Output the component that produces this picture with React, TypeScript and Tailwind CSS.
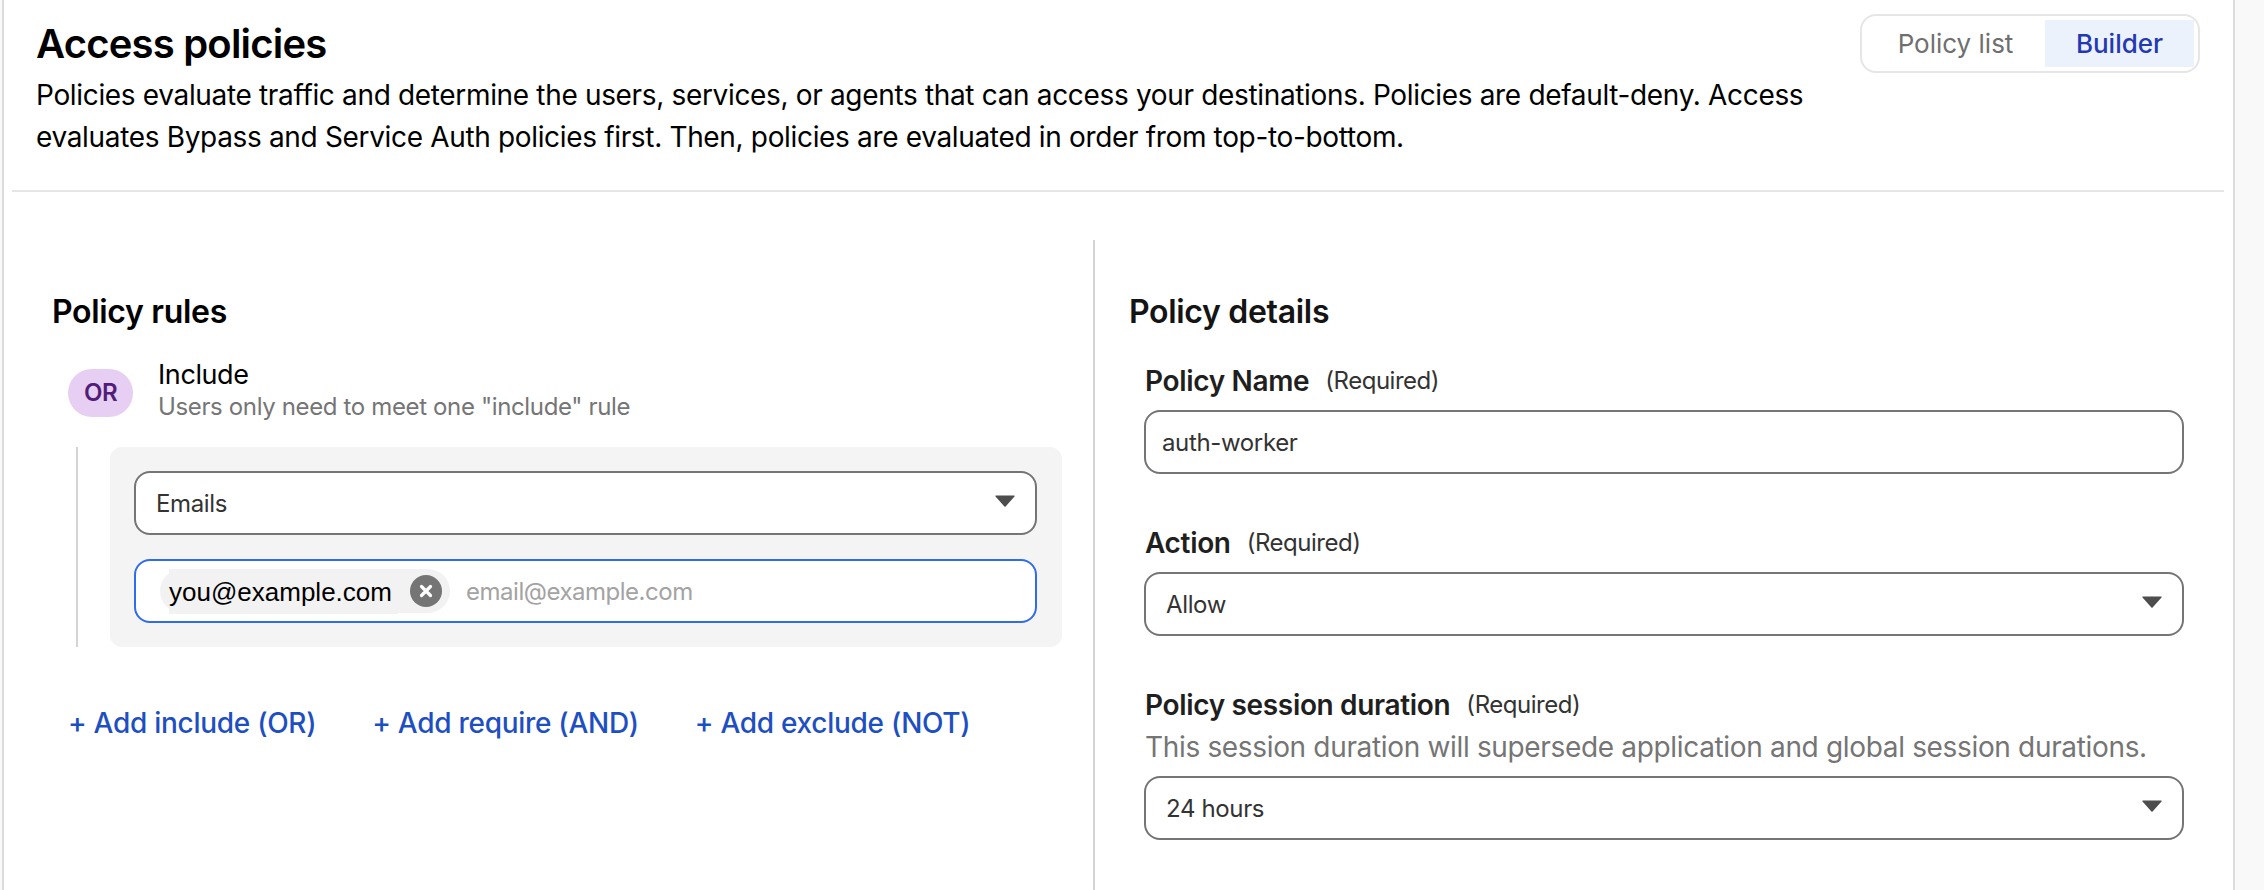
import React from "react";

function Caret() {
  return (
    <svg width="20" height="12" viewBox="0 0 20 12" className="shrink-0">
      <path d="M1 0.5h18a0.7 0.7 0 0 1 0.5 1.1L10.6 11.4a0.8 0.8 0 0 1-1.2 0L0.5 1.6A0.7 0.7 0 0 1 1 0.5z" fill="#4d4d4d" />
    </svg>
  );
}

function Select({ value }: { value: string }) {
  return (
    <div className="flex h-[64px] items-center justify-between rounded-[16px] border-2 border-[#757575] bg-white pl-[20px] pr-[20px]">
      <span className="mt-[2px] text-[24px] leading-[32px] tracking-[-0.015em] text-[#333333]">{value}</span>
      <span className="-mt-[4px] flex"><Caret /></span>
    </div>
  );
}

function Label({ name }: { name: string }) {
  return (
    <div className="flex h-[36px] items-center gap-[16px] pl-[16px] pt-[2px]">
      <span className="text-[28px] font-semibold leading-[34px] tracking-[-0.012em] text-[#1f1f1f]">{name}</span>
      <span className="text-[24px] leading-[34px] tracking-[-0.02em] text-[#333333]">(Required)</span>
    </div>
  );
}

const LINK = "text-[28px] font-medium leading-[36px] tracking-[-0.01em] text-[#1e4fc2]";

export default function App() {
  return (
    <div className="h-[890px] w-[2264px] overflow-hidden bg-[#f9f9f9] pl-[2px] [font-family:Inter,'Liberation_Sans',sans-serif]">
      <div className="h-[890px] w-[2233px] border-x-2 border-[#dcdcdc] bg-white">
        <header className="flex h-[190px] justify-between pl-[32px] pr-[33px] pt-[14px]">
          <div className="w-[1790px]">
            <h1 className="mt-[2px] text-[40px] font-semibold leading-[56px] tracking-[-0.02em] text-black">Access policies</h1>
            <p className="mt-[2px] text-[28px] leading-[42px] tracking-[-0.012em] text-black">
              Policies evaluate traffic and determine the users, services, or agents that can access your destinations. Policies are default-deny. Access evaluates Bypass and Service Auth policies first. Then, policies are evaluated in order from top-to-bottom.
            </p>
          </div>
          <div className="flex h-[59px] w-[340px] items-center justify-between rounded-[16px] border-2 border-[#e6e6e6] pl-[4px] pr-[4px]">
            <span className="flex h-[47px] flex-1 items-center justify-center text-[26px] font-normal text-[#6f6f6f]">Policy list</span>
            <span className="flex h-[47px] w-[149px] items-center justify-center bg-[#ebf2fc] text-[26px] font-medium text-[#2438b4]">Builder</span>
          </div>
        </header>
        <div className="ml-[8px] mr-[9px] h-[2px] bg-[#e6e6e6]" />

        <main className="mt-[48px] flex h-[650px]">
          <section className="w-[1091px] shrink-0 border-r-2 border-[#d4d4d4] pl-[48px] pt-[48px]">
            <h2 className="text-[32px] font-semibold leading-[48px] tracking-[-0.01em] text-black">Policy rules</h2>
            <div className="mt-[27px] flex items-center pl-[16px]">
              <span className="flex h-[48px] w-[65px] items-center justify-center rounded-[24px] bg-[#e6cff2] text-[24px] font-semibold tracking-[-0.02em] text-[#521d7a]">OR</span>
              <div className="-mt-[4px] ml-[25px]">
                <div className="text-[27px] leading-[32px] tracking-[-0.015em] text-black">Include</div>
                <div className="text-[24px] leading-[32px] tracking-[-0.015em] text-[#757575]">Users only need to meet one "include" rule</div>
              </div>
            </div>

            <div className="ml-[24px] mt-[24px] border-l-2 border-[#d4d4d4] pl-[32px]">
              <div className="flex w-[952px] flex-col gap-[24px] rounded-[12px] bg-[#f4f4f4] p-[24px] pr-[25px]">
                <Select value="Emails" />
                <div className="flex h-[64px] items-center gap-[16px] rounded-[16px] border-2 border-[#2f6bed] bg-white pl-[24px]">
                  <span className="flex h-[44px] items-center gap-[12px] rounded-full bg-[#f2f2f2] pl-[9px] pr-[8px]">
                    <span className="flex h-[45px] w-[229px] items-center self-start bg-[#f2f2f2] text-[26px] leading-[36px] text-black [font-family:'Liberation_Sans',sans-serif]">you@example.com</span>
                    <span className="flex h-[32px] w-[32px] items-center justify-center rounded-full bg-[#757575]">
                      <svg width="14" height="14" viewBox="0 0 14 14" className="-mt-[1px]"><path d="M2.5 2.5l9 9M11.5 2.5l-9 9" stroke="#ffffff" strokeWidth="3.2" strokeLinecap="round" /></svg>
                    </span>
                  </span>
                  <input readOnly placeholder="email@example.com" className="mt-[2px] min-w-0 flex-1 bg-transparent text-[24px] tracking-[-0.02em] outline-none placeholder:text-[#a3a3a3]" />
                </div>
              </div>
            </div>

            <div className="ml-[16px] mt-[58px] flex gap-[56px]">
              <span className={LINK}>+ Add include (OR)</span>
              <span className={LINK}>+ Add require (AND)</span>
              <span className={LINK}>+ Add exclude (NOT)</span>
            </div>
          </section>

          <section className="flex-1 pl-[34px] pr-[49px] pt-[48px]">
            <h2 className="text-[32px] font-semibold leading-[48px] tracking-[-0.01em] text-[#141414]">Policy details</h2>
            <div className="mt-[26px]">
              <Label name="Policy Name" />
              <div className="ml-[15px] mt-[12px]">
                <input readOnly value="auth-worker" className="block h-[64px] w-full rounded-[16px] border-2 border-[#757575] bg-white pl-[16px] text-[24px] tracking-[-0.015em] text-[#333333] outline-none" />
              </div>
            </div>
            <div className="mt-[50px]">
              <Label name="Action" />
              <div className="ml-[15px] mt-[12px]"><Select value="Allow" /></div>
            </div>
            <div className="mt-[50px]">
              <Label name="Policy session duration" />
              <div className="mt-[7px] pl-[16px] text-[28px] leading-[36px] tracking-[-0.012em] text-[#757575]">This session duration will supersede application and global session durations.</div>
              <div className="ml-[15px] mt-[11px]"><Select value="24 hours" /></div>
            </div>
          </section>
        </main>
      </div>
    </div>
  );
}
